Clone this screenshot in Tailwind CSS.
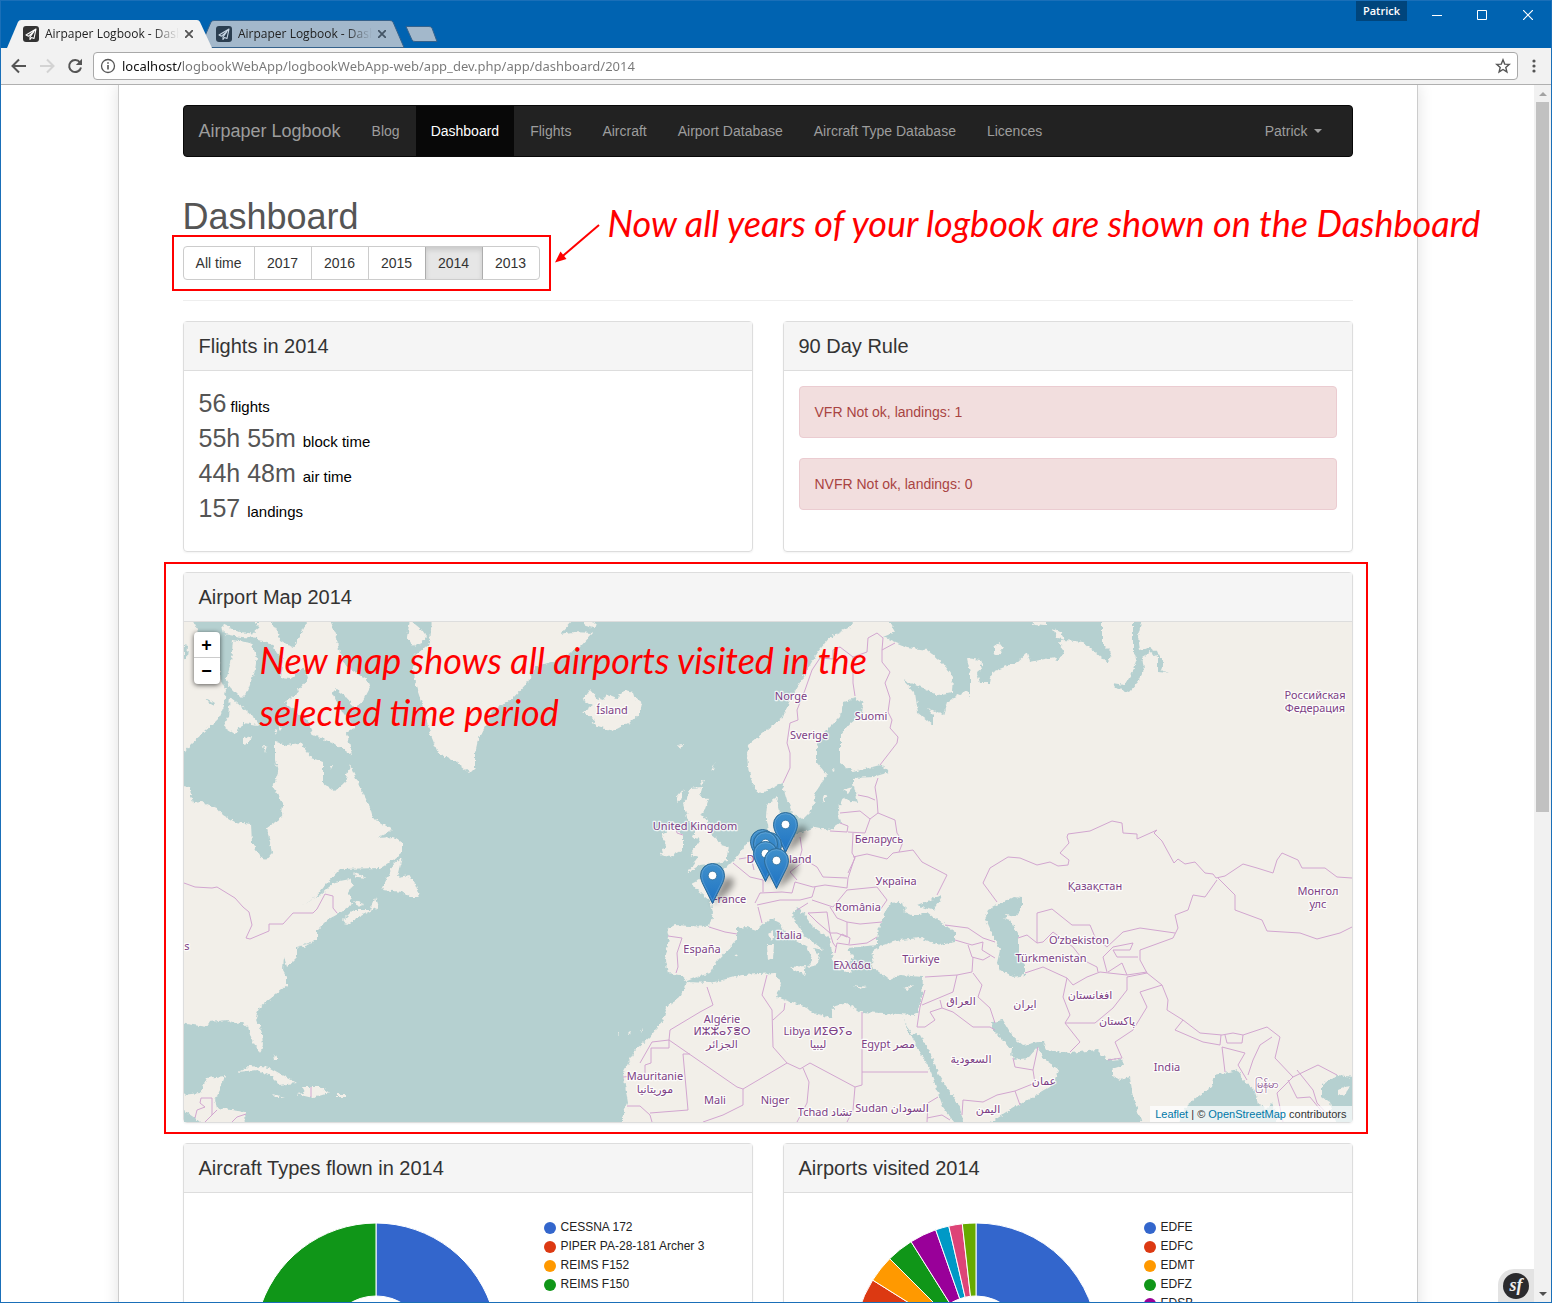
<!DOCTYPE html>
<html lang="en">
<head>
<meta charset="utf-8">
<title>Airpaper Logbook - Dashboard</title>
<script src="https://cdn.jsdelivr.net/npm/@tailwindcss/browser@4"></script>
</head>
<body class="h-screen overflow-hidden bg-white font-['Liberation_Sans',Arial,sans-serif] text-sm text-[#333]">
<div class="flex h-full flex-col border border-[#1a6fb8]">

  <!-- Window title bar with tabs -->
  <header class="flex h-[47px] shrink-0 justify-between bg-[#0063b1] pl-1.5 font-['Open_Sans','Noto_Sans',sans-serif]">
    <div class="flex items-end" role="tablist">
      <div class="relative z-10 flex h-7 w-[205px] items-center gap-1.5 pl-4 text-xs text-[#222]" role="tab" aria-selected="true">
        <svg class="absolute inset-0 -z-10 h-full w-full" viewBox="0 0 205 28" aria-hidden="true"><path d="M0 28 11 2Q12 0 14 0H190Q192 0 193 2L205 28Z" fill="#f2f2f2"/></svg>
        <svg class="size-4 shrink-0" viewBox="0 0 16 16" aria-hidden="true"><rect width="16" height="16" rx="3" fill="#333"/><path d="M13 3 3 9l2.500 1.200L11 5.500 7 10.800v2.700l1.500-2L11 12.500Z" fill="none" stroke="#fff" stroke-width="1.100" stroke-linejoin="round"/></svg>
        <span class="w-[134px] overflow-hidden whitespace-nowrap [mask-image:linear-gradient(to_right,black_80%,transparent)]">Airpaper Logbook - Dashboard</span>
        <button aria-label="Close tab" class="-ml-1 flex size-4 items-center justify-center"><svg class="size-2" viewBox="0 0 8 8" aria-hidden="true"><path d="m0 0 8 8M8 0 0 8" stroke="#555" stroke-width="1.800"/></svg></button>
      </div>
      <div class="relative z-0 -ml-3 flex h-7 w-[205px] items-center gap-1.5 pl-4 text-xs text-[#222]" role="tab" aria-selected="false">
        <svg class="absolute inset-0 -z-10 h-full w-full" viewBox="0 0 205 28" aria-hidden="true"><path d="M0 27.500 11 2Q12 .5 14 .5H190Q192 .5 193 2L204 27.500Z" fill="#a3b8cb" stroke="#35628c"/></svg>
        <svg class="size-4 shrink-0" viewBox="0 0 16 16" aria-hidden="true"><rect width="16" height="16" rx="3" fill="#2b3e50"/><path d="M13 3 3 9l2.500 1.200L11 5.500 7 10.800v2.700l1.500-2L11 12.500Z" fill="none" stroke="#c9d8e6" stroke-width="1.100" stroke-linejoin="round"/></svg>
        <span class="w-[134px] overflow-hidden whitespace-nowrap [mask-image:linear-gradient(to_right,black_80%,transparent)]">Airpaper Logbook - Dashboard</span>
        <button aria-label="Close tab" class="-ml-1 flex size-4 items-center justify-center"><svg class="size-2" viewBox="0 0 8 8" aria-hidden="true"><path d="m0 0 8 8M8 0 0 8" stroke="#445566" stroke-width="1.800"/></svg></button>
      </div>
      <button aria-label="New tab" class="mb-1.5"><svg class="h-4 w-[33px]" viewBox="0 0 33 16" aria-hidden="true"><path d="M1 .5H24Q26 .5 27 2L32 15.500H10Q8 15.500 7 14Z" fill="#a3b8cb" stroke="#35628c"/></svg></button>
    </div>
    <div class="flex items-start">
      <button class="mr-[7px] h-5 w-[51px] bg-[#00457c] text-[11px] font-semibold leading-5 text-white">Patrick</button>
      <button aria-label="Minimize" class="flex h-7 w-[45px] items-center justify-center"><svg class="size-2.5" viewBox="0 0 10 10" aria-hidden="true"><path d="M0 5.500h10" stroke="#fff"/></svg></button>
      <button aria-label="Maximize" class="flex h-7 w-[45px] items-center justify-center"><svg class="size-2.5" viewBox="0 0 10 10" aria-hidden="true"><path d="M.5.5h9v9h-9z" stroke="#fff" fill="none"/></svg></button>
      <button aria-label="Close" class="flex h-7 w-[47px] items-center justify-center"><svg class="size-2.5" viewBox="0 0 10 10" aria-hidden="true"><path d="m0 0 10 10M10 0 0 10" stroke="#fff" stroke-width="1.200"/></svg></button>
    </div>
  </header>

  <!-- Address bar -->
  <div class="flex h-[37px] shrink-0 items-center border-b border-[#b0b0b0] bg-[#f2f2f2] pl-2.5 font-['Noto_Sans','Open_Sans',sans-serif]">
    <button aria-label="Back" class="mr-3"><svg class="size-4" viewBox="0 0 16 16" aria-hidden="true"><path d="M15 8H2M8 1.500 1.500 8 8 14.500" fill="none" stroke="#555" stroke-width="2"/></svg></button>
    <button aria-label="Forward" class="mr-3"><svg class="size-4" viewBox="0 0 16 16" aria-hidden="true"><path d="M1 8h13M8 1.500 14.500 8 8 14.500" fill="none" stroke="#d3d3d3" stroke-width="2"/></svg></button>
    <button aria-label="Reload" class="mr-2.5"><svg class="size-4" viewBox="0 0 16 16" aria-hidden="true"><path d="M13 4.500A6 6 0 1 0 14 9.500" fill="none" stroke="#555" stroke-width="2"/><path d="M15 .8V7H8.800Z" fill="#555"/></svg></button>
    <div class="flex h-7 flex-1 items-center gap-1.5 rounded-sm border border-[#a9a9a9] bg-white px-1.5">
      <svg class="size-4 shrink-0" viewBox="0 0 16 16" aria-hidden="true"><circle cx="8" cy="8" r="6.500" fill="none" stroke="#555" stroke-width="1.300"/><path d="M8 7v4.500M8 4.300v1.500" stroke="#555" stroke-width="1.600"/></svg>
      <input aria-label="Address" class="min-w-0 flex-1 bg-[linear-gradient(to_right,#111_59px,#777_59px)] bg-clip-text text-[13px] text-transparent outline-none" value="localhost/logbookWebApp/logbookWebApp-web/app_dev.php/app/dashboard/2014">
      <button aria-label="Bookmark"><svg class="size-4" viewBox="0 0 16 16" aria-hidden="true"><path d="m8 1.800 1.700 4.300 4.600.3-3.500 3 1.100 4.500L8 11.500l-3.900 2.400 1.100-4.500-3.500-3 4.600-.3Z" fill="none" stroke="#555" stroke-width="1.400"/></svg></button>
    </div>
    <button aria-label="Menu" class="mx-[7px]"><svg class="h-4 w-[19px]" viewBox="0 0 19 16" aria-hidden="true"><g fill="#555"><circle cx="9" cy="3" r="1.600"/><circle cx="9" cy="8" r="1.600"/><circle cx="9" cy="13" r="1.600"/></g></svg></button>
  </div>

  <div class="relative flex min-h-0 flex-1">
    <main class="min-w-0 flex-1 overflow-hidden">
      <div class="mx-auto max-w-[1300px] border-x border-[#ccc] px-16 pt-5 pb-10 shadow-[0_0_15px_rgba(0,0,0,0.12)]">

        <nav class="flex h-[52px] items-stretch gap-px rounded border border-[#080808] bg-[#222] pr-[15px] leading-[50px] text-[#9d9d9d]">
          <a href="#" class="px-[15px] text-lg/[50px]">Airpaper Logbook</a>
          <a href="#" class="px-[15px]">Blog</a>
          <a href="#" class="bg-[#080808] px-[15px] text-white" aria-current="page">Dashboard</a>
          <a href="#" class="px-[15px]">Flights</a>
          <a href="#" class="px-[15px]">Aircraft</a>
          <a href="#" class="px-[15px]">Airport Database</a>
          <a href="#" class="px-[15px]">Aircraft Type Database</a>
          <a href="#" class="px-[15px]">Licences</a>
          <a href="#" class="ml-auto flex items-center gap-1.5 px-[15px]">Patrick <span class="border-x-4 border-t-4 border-x-transparent border-t-[#9d9d9d]"></span></a>
        </nav>

        <h1 class="mt-10 text-4xl/[40px] text-[#555]">Dashboard</h1>
        <div class="relative mt-[9px] flex w-fit rounded border border-[#ccc]">
          <button class="h-8 w-[70px]">All time</button>
          <button class="h-8 w-[57px] border-l border-[#ccc]">2017</button>
          <button class="h-8 w-[57px] border-l border-[#ccc]">2016</button>
          <button class="h-8 w-[57px] border-l border-[#ccc]">2015</button>
          <button class="h-8 w-[58px] border-x border-[#adadad] bg-[#e6e6e6] shadow-[inset_0_3px_5px_rgba(0,0,0,0.125)]" aria-pressed="true">2014</button>
          <button class="h-8 w-14">2013</button>
          <div class="pointer-events-none absolute -inset-3 border-2 border-[#f00]"></div>
          <div class="pointer-events-none absolute -top-11 left-full ml-4 flex items-start whitespace-nowrap font-['Lato','Open_Sans',sans-serif] text-4xl/[40px] italic text-[#f00]">
            <svg class="mt-[21px] mr-2 h-10 w-[45px]" viewBox="0 0 45 40" aria-hidden="true"><path d="M44 1 6 33.500" stroke="#f00" stroke-width="2"/><path d="m0 38.500 5.500-11 6 7.500Z" fill="#f00"/></svg>
            <p>Now all years of your logbook are shown on the Dashboard</p>
          </div>
        </div>
        <hr class="my-5 border-[#eee]">

        <div class="grid grid-cols-2 gap-x-[30px] gap-y-5">
          <section class="rounded border border-[#ddd] shadow-xs">
            <h2 class="border-b border-[#ddd] bg-[#f5f5f5] px-[15px] text-xl/[48px]">Flights in 2014</h2>
            <ul class="px-[15px] pt-[15px] pb-[25px] text-[15px] leading-[35px] text-black">
              <li class="h-[35px]"><span class="text-[25px] text-[#555]">56</span> flights</li>
              <li class="h-[35px]"><span class="text-[25px] text-[#555]">55h 55m </span> block time</li>
              <li class="h-[35px]"><span class="text-[25px] text-[#555]">44h 48m </span> air time</li>
              <li class="h-[35px]"><span class="text-[25px] text-[#555]">157 </span> landings</li>
            </ul>
          </section>
          <section class="rounded border border-[#ddd] shadow-xs">
            <h2 class="border-b border-[#ddd] bg-[#f5f5f5] px-[15px] text-xl/[48px]">90 Day Rule</h2>
            <div class="flex flex-col gap-5 p-[15px] text-[#a94442]">
              <p class="rounded border border-[#ebccd1] bg-[#f2dede] p-[15px] leading-5">VFR Not ok, landings: 1</p>
              <p class="rounded border border-[#ebccd1] bg-[#f2dede] p-[15px] leading-5">NVFR Not ok, landings: 0</p>
            </div>
          </section>

          <section class="relative col-span-2 rounded border border-[#ddd] shadow-xs">
            <h2 class="border-b border-[#ddd] bg-[#f5f5f5] px-[15px] text-xl/[48px]">Airport Map 2014</h2>
            <div class="relative h-[500px] overflow-hidden bg-[#b5d0d0]">
              <svg class="h-full w-full" viewBox="184 622 1168 500" preserveAspectRatio="xMidYMid slice" role="img" aria-label="Map of visited airports">
                <defs>
                  <filter id="coast" x="0" y="0" width="100%" height="100%"><feTurbulence type="fractalNoise" baseFrequency="0.25" numOctaves="2" seed="4"/><feDisplacementMap in="SourceGraphic" scale="5" xChannelSelector="R" yChannelSelector="G"/></filter>
                  <linearGradient id="pinFill" x2="0" y2="1"><stop stop-color="#4090cb"/><stop offset="1" stop-color="#1e73c4"/></linearGradient>
                  <filter id="soft" x="-50%" y="-50%" width="200%" height="200%"><feGaussianBlur stdDeviation="3"/></filter>
                  <g id="pinShadow"><path d="M12 41 22 18Q30 10 34 18Q34 28 12 41Z" fill="#000" opacity=".4" filter="url(#soft)"/></g>
                  <g id="pin"><path d="M12.500.5a12 12 0 0 0-12 12.300c0 2.600 1.200 6 2.400 8.400L12.500 40.500 22.100 21.200c1.200-2.400 2.400-5.800 2.400-8.400A12 12 0 0 0 12.500.5Z" fill="url(#pinFill)" stroke="#2e6c97"/><path d="M12.500 1.800A10.700 10.700 0 0 0 1.800 12.800c0 2.300 1.100 5.500 2.200 7.700l8.500 17 8.500-17c1.100-2.200 2.200-5.400 2.200-7.700A10.700 10.700 0 0 0 12.500 1.800Z" fill="none" stroke="#fff" stroke-opacity=".15"/><circle cx="12.500" cy="12.500" r="4.300" fill="#fff" stroke="#2e6c97" stroke-width=".8"/></g>
                </defs>
                <g filter="url(#coast)">
                <g fill="#f2efe9">
                  <!-- North America -->
                  <path d="M180 618H192L200 636 214 642 218 652 221 680 226 690 224 706 219 718 213 724 203 733 190 745 180 757Z"/>
                  <path d="M222 624 240 632 258 634 262 638 240 637 224 634ZM254 622 272 622 278 632 268 640 262 630Z"/>
                  <path d="M233 640 251 643 257 657 255 670 247 692 241 698 230 687 226 680 231 663Z"/>
                  <path d="M230 697 242 707 252 715 259 725 243 723 235 734 224 727 228 717Z"/>
                  <path d="M243 738 252 736 248 744 243 745ZM263 745 267 746 265 752ZM274 730 278 731 276 734ZM277 726 282 728 280 731ZM330 765 333 765 331 769Z"/>
                  <path d="M309 618 330 620 337 637 338 648 347 667 367 680 370 688 362 703 353 708 348 698 337 690 332 693 343 713 355 727 347 733 352 755 333 743 313 735 307 720 290 707 285 702 295 695 308 678 305 668 290 678 280 677 283 660 270 643 258 640 253 633 260 627 277 630 280 640 293 648 300 636Z"/>
                  <path d="M275 742 287 745 300 743 312 758 323 762 323 783 335 791 345 782 350 765 357 780 363 793 370 807 373 818 393 830 378 838 393 837 402 843 402 853 393 860 380 868 340 869 327 883 316 897 303 905 320 895 335 882 350 879 353 885 349 892 352 905 340 913 327 920 317 930 317 940 297 947 297 957 292 962 287 967 284 957 283 970 287 977 287 985 275 995 260 1007 256 1017 262 1033 263 1045 260 1053 252 1040 248 1027 242 1022 235 1023 227 1020 210 1022 207 1027 180 1023V785L189 787 193 803 202 802 217 808 223 815 235 822 251 824 252 843 260 855 265 861 272 853 267 828 282 817 283 803 273 787 278 773 275 760Z"/>
                  <path d="M402 857 397 877 410 875 415 883 419 897 410 897 403 892 382 890 388 877 393 865ZM352 872 367 878 357 877ZM343 920 353 910 370 910 375 898 378 907 357 918 347 925ZM354 901 364 904 358 906ZM299 946 313 943 303 947Z"/>
                  <path d="M180 1095 200 1093 207 1078 225 1076 220 1090 215 1100 217 1108 245 1112 246 1126H205L195 1118 180 1108Z"/>
                  <path d="M238 1072 250 1066 270 1068 297 1083 278 1085 273 1077 257 1070ZM302 1087 320 1087 330 1093 313 1098 296 1094 305 1093ZM273 1094 285 1097 276 1097ZM337 1094 345 1094 345 1097 337 1097ZM274 1054 277 1060 275 1060Z"/>
                  <!-- Greenland and Iceland -->
                  <path d="M432 618 430 643 413 657 415 683 423 707 430 733 438 753 457 763 470 773 475 768 475 753 478 740 487 723 490 713 513 698 527 683 535 667 557 660 580 647 593 633 573 632 560 634 575 618ZM410 620 422 630 427 637 422 643 413 647 407 637ZM582 618 596 622 594 628 586 626Z"/>
                  <path d="M583 700 590 690 597 698 603 700 607 694 617 698 625 690 633 692 635 698 642 703 640 713 630 722 613 731 598 726 592 724 595 720 583 712 592 706Z"/>
                  <path d="M677 745 683 744 681 750ZM711 771 715 763 713 770ZM701 781 704 780 702 786Z"/>
                  <!-- Great Britain and Ireland -->
                  <path d="M690 788 702 787 700 797 709 798 705 810 700 815 708 820 710 833 718 840 722 845 729 847 727 855 727 861 715 863 700 865 687 873 698 858 690 855 700 840 693 837 696 825 690 822 687 817 683 803 688 797Z"/>
                  <path d="M663 833 673 828 683 834 683 850 670 857 660 855 667 845 662 838ZM677 797 684 788 679 803Z"/>
                  <!-- Europe, Asia and Africa -->
                  <path d="M747 753 748 767 752 783 757 792 763 793 777 785 782 783 787 800 792 812 802 820 812 810 815 793 827 775 817 763 817 747 820 737 830 727 840 717 843 702 855 698 863 703 862 713 850 723 840 735 840 763 853 772 880 765 890 772 873 777 853 778 853 783 858 803 852 802 843 797 838 810 840 823 830 830 815 827 800 833 790 838 778 834 773 824 780 813 777 803 778 797 767 805 766 815 770 836 756 838 747 843 737 857 727 867 710 874 692 883 697 890 710 900 713 913 709 927 690 926 675 925 667 929 669 938 665 960 668 973 680 975 687 981 697 977 710 973 718 960 737 940 737 928 747 927 757 930 770 918 780 923 785 933 807 947 813 960 808 967 817 965 820 957 813 948 824 950 803 935 792 915 797 907 803 913 813 927 830 938 833 960 847 973 852 973 848 963 853 957 848 948 877 945 877 938 880 925 890 903 900 902 907 907 903 911 912 915 920 915 927 912 933 917 955 932 955 942 940 945 920 938 900 940 883 945 873 950 872 967 890 980 900 975 923 977 922 997 917 1013 913 1015 883 1013 860 1012 847 1003 833 1007 832 1018 813 1013 807 1007 785 1000 777 997 782 983 775 973 743 975 710 983 687 982 680 997 667 1007 663 1020 650 1037 635 1050 623 1073 628 1103 622 1117V1126H1356V618H1102V643L1112 653 1108 663 1083 642 1065 640 1058 642 1065 652 1057 661 1055 657 1030 662 1027 653 1017 662 992 672 990 683 980 683 977 673 983 668 980 660 967 658 970 673 970 697 967 690 947 702 943 715 927 708 933 715 933 725 918 713 915 693 903 680 920 687 937 695 952 692 953 677 943 663 927 650 907 647 883 637 895 632 887 618H857L850 627 830 637 817 653 803 677 790 700 783 717 767 730 750 743Z"/>
                  <path d="M994 647 1000 643 1004 648 999 655 994 653ZM1026 618 1046 618 1045 626 1035 625ZM1053 628 1060 632 1065 640 1057 638Z"/>
                  <path d="M827 795 822 803 824 795ZM815 800 812 810 813 801ZM832 769 836 770 833 772ZM843 790 852 787 848 793ZM782 816 789 814 787 822 783 821Z"/>
                  <path d="M767 945 774 945 773 958 768 960ZM769 933 773 930 773 938 771 941ZM790 967 806 966 804 975ZM853 985 867 987 860 989ZM903 988 913 985 908 990ZM734 955 738 954 737 957ZM617 1033 619 1032 619 1035ZM628 1034 631 1031 630 1035ZM640 1031 643 1028 641 1032Z"/>
                </g>
                <!-- Inland seas and ocean south of Asia -->
                <g fill="#b5d0d0">
                  <path d="M903 1015 907 1030 912 1037 930 1070 943 1107 957 1126H964L960 1107 940 1077 930 1053 920 1035 917 1034 913 1035 907 1027Z"/>
                  <path d="M985 1126 1015 1107 1033 1097 1050 1087 1059 1070 1043 1058 1038 1047 1028 1058 1013 1060 1008 1045 993 1030 992 1022 1003 1020 1013 1037 1023 1045 1038 1042 1043 1042 1047 1050 1070 1053 1097 1050 1107 1060 1113 1067 1112 1075 1120 1080 1130 1077 1133 1097 1143 1126Z"/>
                  <path d="M1107 1060 1122 1059 1124 1065 1112 1069Z"/>
                  <path d="M1177 1126 1187 1105 1197 1097 1212 1087 1215 1075 1238 1070 1243 1080 1255 1090 1258 1105 1267 1108 1272 1103 1277 1113V1126ZM1356 1077 1337 1075 1322 1085 1322 1097 1330 1103 1337 1126H1356Z"/>
                  <path d="M1022 898 1013 897 988 910 985 917 992 933 1000 950 997 963 1000 970 1013 977 1025 975 1025 965 1018 953 1018 933 1010 920 1003 918 1007 915 1015 917 1022 908ZM917 905 930 900 942 896 938 903 933 910 925 908Z"/>
                  <path d="M1133 618H1142L1138 637 1140 650 1150 648 1158 652 1163 663 1160 670 1168 673 1158 672 1158 657 1150 652 1142 657 1144 670 1138 682 1129 692 1115 688 1112 683 1125 685 1132 673 1137 658 1133 652Z"/>
                  <path d="M206 698 214 703 212 706ZM184 645 188 646 187 658 184 660ZM335 688 341 700 336 700Z"/>
                </g>
                <path d="M1338 1090 1349 1085 1345 1096 1338 1094ZM1008 1048 1012 1048 1011 1056 1009 1055Z" fill="#f2efe9"/>
                </g>
                <!-- Country borders -->
                <g fill="none" stroke="#d2a6d0" stroke-linejoin="round">
                  <path d="M184 883 195 887 212 888 217 887 235 898 243 907 249 912 252 925 246 938 250 939 269 931V924H283L293 913H313L317 909 325 894 333 896V908L337 913M201 1098H212V1115L205 1122M201 1098 200 1103 205 1107 197 1110 195 1118M212 1115 217 1110M246 1114 237 1117 232 1122M311 1087V1097"/>
                  <path d="M783 783 790 768V753L787 743 790 723 798 720 797 710 805 690 812 670 820 658 833 659V650L840 647 853 657V683L855 696M853 657 867 652 868 638 877 633 883 638 882 650 895 643M882 650V662L890 672 885 683 890 698 888 712 892 720 890 728 898 737 897 743 880 765"/>
                  <path d="M878 778 875 787 877 800 878 813 895 820 897 833 903 842 899 852M858 795 868 797 875 800M840 813 860 811 870 819 878 813M840 823 848 826 847 832 830 831M848 832 865 833 870 819M853 833 852 853 855 858 848 873M853 857 867 854 887 859 893 853 913 850 922 862 947 875 937 895M800 837 802 850 800 857 817 867 823 877 847 878"/>
                  <path d="M755 903 760 893 782 892 792 893 795 882 813 887 825 885 847 888 848 878 855 857M757 905 780 900 800 900 812 897 815 887M758 907 762 923M709 927 725 932 737 934M668 936 682 938 677 953 678 967 676 973M733 863 750 877 763 880V892M739 859 751 857 754 870M790 872 803 862M790 872 797 880M676 828 677 833 683 835"/>
                  <path d="M812 900 833 907 847 890 877 887 887 900 880 910M797 910 808 903M808 913 827 912 830 933 817 922ZM830 907 837 918 847 922 860 924 882 922M847 922V937L837 933H830M835 953 837 943 850 945 867 943 877 937M837 940 842 934 850 938 849 944M830 933 833 943 836 947"/>
                  <path d="M945 925 968 928 983 938 995 942M955 940 972 945 983 942 982 950 995 958M968 945 972 957 983 960 990 956M925 977 957 975 972 972 973 957M957 975 953 992 922 1005M973 973 982 985 978 997 990 1008 995 1023M940 1000 942 1008 953 1012 973 1027H990L995 1030M942 1008 930 1012 935 1020 925 1027H917M925 990 920 1007 917 1027"/>
                  <path d="M1013 1058 1015 1067 1033 1070 1038 1047M1033 1070 1035 1083 1015 1091 997 1095 983 1102 963 1100 962 1115M1015 1091 1020 1105M1025 973 1043 967 1067 978 1073 985 1087 977 1100 972 1127 975 1147 972M1067 978 1063 997 1070 1015 1065 1023 1080 1042 1070 1052M1065 1023 1095 1023 1113 1008 1127 990V977L1147 973M1162 985 1140 992 1147 1007 1133 1030 1115 1042 1122 1058 1108 1060"/>
                  <path d="M1147 973 1162 985 1168 1000 1167 1010 1183 1020 1200 1033 1222 1035 1233 1033 1243 1035 1267 1027 1280 1037 1275 1058 1293 1077 1318 1065 1337 1075M1183 1020 1175 1030 1203 1042 1220 1045 1221 1035M1225 1035 1227 1043H1242L1243 1035M1222 1047 1225 1072M1222 1047 1245 1053 1238 1065 1247 1080M1272 1037 1260 1045 1253 1060 1248 1075M1293 1077 1277 1093 1283 1122M1297 1070 1313 1090 1317 1103 1330 1117M1288 1080 1297 1098 1310 1097 1323 1113"/>
                  <path d="M997 902 983 883 990 868 1008 857 1020 858 1037 865 1050 862 1058 866 1068 865 1069 860 1060 853 1069 843 1067 837 1068 834 1090 831 1112 821 1122 823 1123 833 1137 834V839L1157 830 1154 833 1162 841 1174 863 1178 859 1185 864 1195 862 1205 873 1213 874 1216 878 1225 876 1243 864 1257 868 1273 873 1277 860 1282 853 1298 860 1302 868 1325 868 1337 877 1352 878M1218 878 1235 895V910L1262 920 1267 931 1300 933 1317 939 1340 933 1352 927M1217 880 1205 897 1193 895 1188 910 1175 915 1178 928 1173 938 1140 950V960L1147 973"/>
                  <path d="M1018 938 1027 935 1037 943V913L1052 909 1072 925H1090L1095 937 1107 947 1123 932 1140 928 1175 933M1037 943 1043 942 1053 932 1073 947 1083 960 1097 967 1098 972M1107 972 1103 957 1113 947 1133 943 1130 950H1113L1117 957H1138M1108 972 1122 963 1127 975"/>
                  <path d="M707 987 713 1005 700 1012 670 1030 669 1040 737 1087 743 1089 787 1063M669 1040 652 1042 640 1063M669 1040V1048H651V1063L645 1065V1075L623 1077M690 1054H683L688 1110 650 1113M627 1106H640L650 1115 652 1122M743 1089V1105L723 1115 703 1122M767 975 762 995 772 1010 773 1047 787 1063M785 1003 784 1010 773 1020M787 1063 800 1069 810 1063 855 1087 862 1085V1012M862 1072H928M803 1068 809 1082 807 1103 797 1122M855 1087 853 1110 847 1122M927 1122 928 1103 938 1097M927 1118 942 1115 950 1120"/>
                </g>
                <g class="font-['Noto_Sans','DejaVu_Sans',sans-serif] text-[11px]" fill="#7d3f85" stroke="#fff" stroke-opacity=".8" stroke-width="2.500" stroke-linejoin="round" paint-order="stroke" text-anchor="middle">
                  <text x="612" y="714">Ísland</text>
                  <text x="791" y="700">Norge</text>
                  <text x="871" y="720">Suomi</text>
                  <text x="809" y="739">Sverige</text>
                  <text x="695" y="830">United Kingdom</text>
                  <text x="879" y="843">Беларусь</text>
                  <text x="779" y="863">Deutschland</text>
                  <text x="896" y="885">Україна</text>
                  <text x="729" y="903">France</text>
                  <text x="858" y="911">România</text>
                  <text x="789" y="939">Italia</text>
                  <text x="702" y="953">España</text>
                  <text x="852" y="969">Ελλάδα</text>
                  <text x="921" y="963">Türkiye</text>
                  <text x="1095" y="890">Қазақстан</text>
                  <text x="1079" y="944">O‘zbekiston</text>
                  <text x="1051" y="962">Türkmenistan</text>
                  <text x="1315" y="699">Российская</text>
                  <text x="1315" y="712">Федерация</text>
                  <text x="1318" y="895">Монгол</text>
                  <text x="1318" y="908">улс</text>
                  <text x="1167" y="1071">India</text>
                  <text x="1266" y="1088">မြန်မာ</text>
                  <text x="722" y="1023">Algérie</text>
                  <text x="722" y="1035">ⵍⵣⵣⴰⵢⴻⵔ</text>
                  <text x="722" y="1048">الجزائر</text>
                  <text x="818" y="1035">Libya ⵍⵉⴱⵢⴰ</text>
                  <text x="818" y="1048">ليبيا</text>
                  <text x="888" y="1048">Egypt مصر</text>
                  <text x="655" y="1080">Mauritanie</text>
                  <text x="655" y="1093">موريتانيا</text>
                  <text x="715" y="1104">Mali</text>
                  <text x="775" y="1104">Niger</text>
                  <text x="825" y="1116">Tchad تشاد</text>
                  <text x="892" y="1112">Sudan السودان</text>
                  <text x="961" y="1005">العراق</text>
                  <text x="1025" y="1008">ایران</text>
                  <text x="1090" y="999">افغانستان</text>
                  <text x="1117" y="1025">پاکستان</text>
                  <text x="971" y="1063">السعودية</text>
                  <text x="1044" y="1085">عمان</text>
                  <text x="988" y="1113">اليمن</text>
                  <text x="187" y="950">s</text>
                </g>
                <use href="#pinShadow" x="773" y="812"/><use href="#pinShadow" x="753" y="841"/><use href="#pinShadow" x="764" y="848"/><use href="#pinShadow" x="700" y="863"/>
                <use href="#pin" x="773" y="812"/>
                <use href="#pin" x="750" y="829"/>
                <use href="#pin" x="757" y="832"/>
                <use href="#pin" x="753" y="831"/>
                <use href="#pin" x="753" y="841"/>
                <use href="#pin" x="764" y="848"/>
                <use href="#pin" x="700" y="863"/>
              </svg>
              <div class="absolute top-2.5 left-2.5 flex w-[26px] flex-col rounded bg-white text-lg/[26px] font-bold text-black shadow-[0_1px_5px_rgba(0,0,0,0.65)]">
                <button aria-label="Zoom in" class="h-[26px] border-b border-[#ccc]">+</button>
                <button aria-label="Zoom out" class="h-[26px]">−</button>
              </div>
              <p class="absolute top-3 left-[76px] w-[680px] font-['Lato','Open_Sans',sans-serif] text-4xl/[52px] italic text-[#f00]">New map shows all airports visited in the<br>selected time period</p>
              <p class="absolute right-0 bottom-0 bg-white/70 px-[5px] text-[11px] leading-4"><a href="#" class="text-[#0078a8]">Leaflet</a> | © <a href="#" class="text-[#0078a8]">OpenStreetMap</a> contributors</p>
            </div>
            <div class="pointer-events-none absolute -top-[11px] -right-4 -bottom-3 -left-5 border-2 border-[#f00]"></div>
          </section>

          <section class="rounded border border-[#ddd] shadow-xs">
            <h2 class="border-b border-[#ddd] bg-[#f5f5f5] px-[15px] text-xl/[48px]">Aircraft Types flown in 2014</h2>
            <div class="flex pt-[25px] pl-[70px]">
              <svg class="mt-[5px] mr-[46px] size-[244px] shrink-0" viewBox="-122 -122 244 244" role="img" aria-label="Aircraft types chart">
                <g stroke="#fff">
                  <path d="M0-122A122 122 0 0 1 60 106L24 43A49 49 0 0 0 0-49Z" fill="#3366cc"/>
                  <path d="M60 106A122 122 0 0 1 0 122V49A49 49 0 0 0 24 43Z" fill="#dc3912"/>
                  <path d="M0 122A122 122 0 0 1-60 106L-24 43A49 49 0 0 0 0 49Z" fill="#ff9900"/>
                  <path d="M-60 106A122 122 0 0 1 0-122V-49A49 49 0 0 0-24 43Z" fill="#109618"/>
                </g>
              </svg>
              <ul class="text-xs/[19px] text-[#222]">
                <li class="flex items-center gap-[5px]"><span class="size-3 rounded-full bg-[#3366cc]"></span>CESSNA 172</li>
                <li class="flex items-center gap-[5px]"><span class="size-3 rounded-full bg-[#dc3912]"></span>PIPER PA-28-181 Archer 3</li>
                <li class="flex items-center gap-[5px]"><span class="size-3 rounded-full bg-[#ff9900]"></span>REIMS F152</li>
                <li class="flex items-center gap-[5px]"><span class="size-3 rounded-full bg-[#109618]"></span>REIMS F150</li>
              </ul>
            </div>
          </section>
          <section class="rounded border border-[#ddd] shadow-xs">
            <h2 class="border-b border-[#ddd] bg-[#f5f5f5] px-[15px] text-xl/[48px]">Airports visited 2014</h2>
            <div class="flex pt-[25px] pl-[70px]">
              <svg class="mt-[5px] mr-[46px] size-[244px] shrink-0" viewBox="-122 -122 244 244" role="img" aria-label="Airports chart">
                <g stroke="#fff">
                  <path d="M0-122A122 122 0 1 1-122 0H-49A49 49 0 1 0 0-49Z" fill="#3366cc"/>
                  <path d="M-122 0A122 122 0 0 1-103.300-64.900L-41.500-26.100A49 49 0 0 0-49 0Z" fill="#dc3912"/>
                  <path d="M-103.300-64.900A122 122 0 0 1-86.300-86.300L-34.600-34.600A49 49 0 0 0-41.500-26.100Z" fill="#ff9900"/>
                  <path d="M-86.300-86.300A122 122 0 0 1-64.900-103.300L-26.100-41.500A49 49 0 0 0-34.600-34.600Z" fill="#109618"/>
                  <path d="M-64.900-103.300A122 122 0 0 1-40.300-115.200L-16.200-46.200A49 49 0 0 0-26.100-41.500Z" fill="#990099"/>
                  <path d="M-40.300-115.200A122 122 0 0 1-27.200-118.900L-10.900-47.800A49 49 0 0 0-16.200-46.200Z" fill="#0099c6"/>
                  <path d="M-27.200-118.900A122 122 0 0 1-13.700-121.200L-5.500-48.700A49 49 0 0 0-10.900-47.800Z" fill="#dd4477"/>
                  <path d="M-13.700-121.200A122 122 0 0 1 0-122V-49A49 49 0 0 0-5.500-48.700Z" fill="#66aa00"/>
                </g>
              </svg>
              <ul class="text-xs/[19px] text-[#222]">
                <li class="flex items-center gap-[5px]"><span class="size-3 rounded-full bg-[#3366cc]"></span>EDFE</li>
                <li class="flex items-center gap-[5px]"><span class="size-3 rounded-full bg-[#dc3912]"></span>EDFC</li>
                <li class="flex items-center gap-[5px]"><span class="size-3 rounded-full bg-[#ff9900]"></span>EDMT</li>
                <li class="flex items-center gap-[5px]"><span class="size-3 rounded-full bg-[#109618]"></span>EDFZ</li>
                <li class="flex items-center gap-[5px]"><span class="size-3 rounded-full bg-[#990099]"></span>EDSB</li>
              </ul>
            </div>
          </section>
        </div>
      </div>
    </main>

    <!-- Scrollbar -->
    <div class="flex w-[17px] shrink-0 flex-col items-center justify-between bg-[#f1f1f1]" aria-hidden="true">
      <div class="flex h-[17px] items-center"><span class="border-x-4 border-b-4 border-x-transparent border-b-[#a3a3a3]"></span></div>
      <div class="min-h-0 w-[13px] flex-1"><div class="h-[60%] bg-[#c1c1c1]"></div></div>
      <div class="flex h-[17px] items-center"><span class="border-x-4 border-t-4 border-x-transparent border-t-[#505050]"></span></div>
    </div>

    <!-- Symfony toolbar badge -->
    <button aria-label="Open debug toolbar" class="absolute right-[17px] bottom-0 flex h-[33px] w-9 items-center justify-center rounded-tl-2xl bg-[#e3e3e3]">
      <span class="size-[26px] rounded-full bg-[#2b2b2e] font-['Liberation_Serif',serif] text-lg/[24px] font-bold italic text-[#eee]">sf</span>
    </button>
  </div>
</div>
</body>
</html>
